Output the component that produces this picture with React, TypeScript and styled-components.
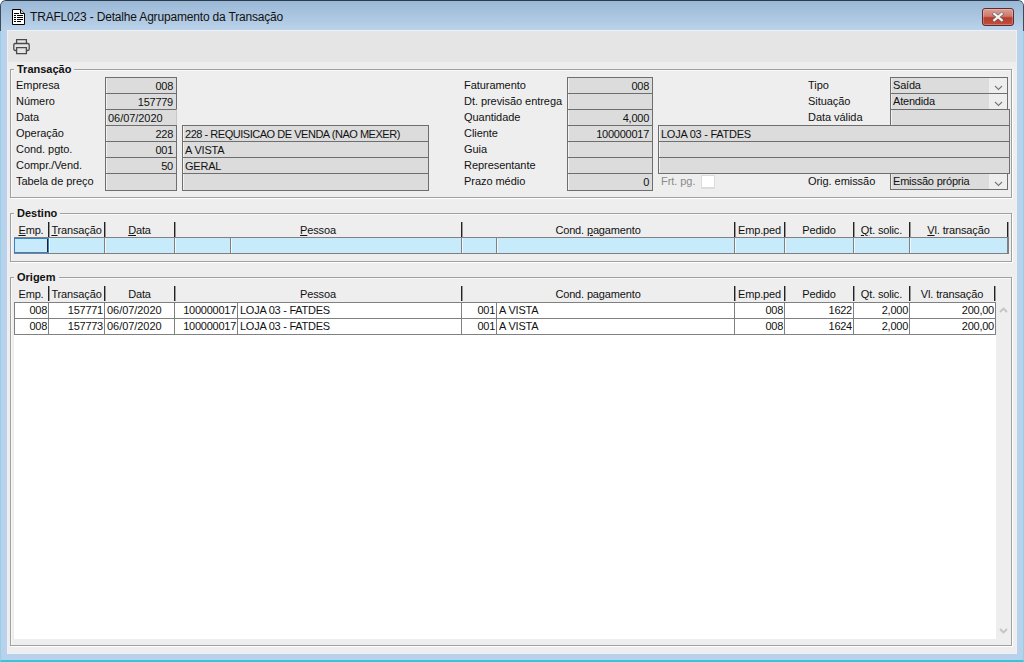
import React from 'react';
import styled, { createGlobalStyle } from 'styled-components';

const FONT = '"Liberation Sans", Arial, sans-serif';

const Global = createGlobalStyle`
  html, body { margin: 0; padding: 0; background: #fff; }
  * { box-sizing: border-box; }
  body { font: 11px/16px ${FONT}; color: #111; }
`;

const Frame = styled.div`
  width: 1024px; height: 662px; display: flex; flex-direction: column;
  padding: 0 7px 7px;
  background: #b9d1ea;
  border: 1px solid #8fd3e6; border-top-color: #2b3a48; border-bottom: 2px solid #35c6dc;
  border-radius: 6px 6px 0 0;
`;
const TitleBar = styled.header`
  height: 30px; flex: none; margin: 0 -7px; padding: 2px 9px 0 11px;
  display: flex; align-items: center; gap: 5px;
  background: linear-gradient(#9ab8d6, #bcd3ea);
  border-radius: 5px 5px 0 0;
  box-shadow: -1px 0 0 #3d4c5c, 1px 0 0 #3d4c5c;
`;
const TitleText = styled.h1`
  flex: 1; margin: 0; font: 400 12px/16px ${FONT}; letter-spacing: -0.18px; color: #111;
`;
const CloseButton = styled.button`
  width: 32px; height: 18px; padding: 0; display: flex; align-items: center; justify-content: center;
  border: 1px solid #5c2a32; border-radius: 3px;
  background: linear-gradient(#dc9e94 0, #cf7a6c 45%, #b83c2c 55%, #c0503e 100%);
  box-shadow: inset 0 0 0 1px rgba(255,255,255,.25);
`;
const Content = styled.main`
  flex: 1; min-height: 0; display: flex; flex-direction: column;
  background: #eeeeee; box-shadow: 0 0 0 1px #eaf2fa;
`;
const Toolbar = styled.div`
  height: 31px; flex: none; padding: 7px 0 0 5px; background: #e5e5e5;
`;
const Body = styled.div`
  flex: 1; min-height: 0; display: flex; flex-direction: column; gap: 15px;
  padding: 7px 4px 7px 2px;
`;
const Panel = styled.section<{ $height?: number; $grow?: boolean }>`
  position: relative; flex: ${p => (p.$grow ? '1' : 'none')}; min-height: 0;
  ${p => (p.$height ? `height: ${p.$height}px;` : '')}
  display: flex; flex-direction: column;
  border: 1px solid #a0a0a0;
  box-shadow: 1px 1px 0 #fff, inset 1px 1px 0 #f8f8f8;
  padding: 8px 2px 6px 3px;
`;
const Legend = styled.h2`
  position: absolute; left: 3px; top: -7px; margin: 0; padding: 0 3px;
  background: #eeeeee; font: 700 11px/13px ${FONT}; letter-spacing: 0; color: #111;
`;
const FormGrid = styled.div`
  display: grid; margin: -1px -2px 0 -3px;
  grid-template-columns: 94px 72px 5px 247px 35px 103px 86px 5px 150px 82px 120px;
  grid-auto-rows: 16px;
`;
const Label = styled.span<{ $col: number; $row: number; $muted?: boolean }>`
  grid-column: ${p => p.$col}; grid-row: ${p => p.$row};
  padding-left: ${p => (p.$col === 1 ? 5 : 0)}px;
  letter-spacing: -0.05px; line-height: 16px; white-space: nowrap;
  color: ${p => (p.$muted ? '#8a8a8a' : '#111')};
`;
const Field = styled.div<{ $col: string; $row: number; $right?: boolean; $tall?: boolean; $soft?: boolean; $track?: number }>`
  grid-column: ${p => p.$col}; grid-row: ${p => p.$row}; align-self: start;
  height: ${p => (p.$tall ? 18 : 17)}px; padding: 1px 2px 0 2px; position: relative;
  ${p => (p.$right ? 'padding-right: 3px;' : '')}
  background: #dcdcdc; border: 1px solid #6e6e6e;
  ${p => (p.$soft ? 'border-right-color: #c8c8c8; border-bottom-color:#8a8a8a;' : '')}
  box-shadow: inset 1px 0 0 #f2f2f2;
  text-align: ${p => (p.$right ? 'right' : 'left')};
  letter-spacing: ${p => p.$track ?? (p.$right ? -0.25 : -0.05)}px;
  line-height: 14px; white-space: nowrap; overflow: hidden;
`;
const Select = styled.div<{ $row: number }>`
  grid-column: 11; grid-row: ${p => p.$row}; align-self: start;
  height: 17px; margin: 0 2px 0 0; display: flex;
  background: #eeeeee; border: 1px solid #6e6e6e;
`;
const SelectValue = styled.span`
  flex: 1; background: #dcdcdc; padding-left: 1px; margin-left: 1px;
  letter-spacing: -0.2px; line-height: 14px;
`;
const SelectArrow = styled.span`
  width: 18px; flex: none; display: flex; align-items: flex-end; justify-content: center; padding-bottom: 2px;
`;
const CheckBox = styled.span`
  grid-column: 9; grid-row: 7; display: block; width: 14px; height: 14px; margin: 2px 0 0 43px;
  background: #fff; border: 1px solid #dcdcdc; border-width: 1px 1px 2px 1px;
`;

const HeadRow = styled.div<{ $cols: string }>`
  display: grid; grid-template-columns: ${p => p.$cols}; height: 16px; flex: none;
`;
const HeadCell = styled.div`
  text-align: center; line-height: 16px; letter-spacing: -0.15px; white-space: nowrap;
  border-right: 1px solid #222; overflow: hidden; height: 15px;
  box-shadow: 1px 0 0 #999;
  u { text-decoration: underline; }
`;
const FilterRow = styled.div<{ $cols: string }>`
  display: grid; grid-template-columns: ${p => p.$cols}; height: 17px; flex: none;
  margin-top: -1px; background: #c8ebfb;
  border-top: 1px solid #808080; border-bottom: 1px solid #808080; border-right: 1px solid #808080;
`;
const FilterCell = styled.div<{ $active?: boolean }>`
  border-right: 1px solid ${p => (p.$active ? '#222' : '#808080')};
  box-shadow: inset 1px 0 0 #eef9ff;
  ${p => (p.$active ? 'outline: 1px solid #3a80c8; outline-offset: -1px; border-right-width: 2px;' : '')}
`;
const ScrollArea = styled.div`
  flex: 1; min-height: 0; display: flex; gap: 1px; margin-top: 0;
`;
const TableBody = styled.div`
  width: 982px; flex: none; background: #fff; border-top: 1px solid #808080;
`;
const DataRow = styled.div<{ $cols: string }>`
  display: grid; grid-template-columns: ${p => p.$cols}; height: 16px;
  border-bottom: 1px solid #808080; border-left: 1px solid #808080;
`;
const DataCell = styled.div<{ $right?: boolean; $track?: number }>`
  border-right: 1px solid #808080; padding: 0 ${p => (p.$right ? 1 : 2)}px 0 2px;
  text-align: ${p => (p.$right ? 'right' : 'left')};
  line-height: 15px; letter-spacing: ${p => p.$track ?? (p.$right ? -0.25 : -0.05)}px;
  white-space: nowrap; overflow: hidden;
`;
const ScrollBar = styled.aside`
  width: 13px; flex: none; display: flex; flex-direction: column; justify-content: space-between;
  align-items: center; padding: 5px 0 5px;
`;

const Chevron = ({ color = '#777', up = false, w = 1.1 }: { color?: string; up?: boolean; w?: number }) => (
  <svg width="9" height="6" viewBox="0 0 9 6">
    <path d={up ? 'M1 5 L4.5 1.5 L8 5' : 'M1 1 L4.5 4.5 L8 1'} fill="none" stroke={color} strokeWidth={w} />
  </svg>
);

const DocIcon = () => (
  <svg width="13" height="16" viewBox="0 0 13 16">
    <path d="M.5.5H8.5L12.5 4.5V15.5H.5Z" fill="#fff" stroke="#000" />
    <path d="M8.5.5V4.5H12.5" fill="#ccc" stroke="#000" />
    <path d="M2 4.5h5M2 6.5h2M5 6.5h6M2 8.5h2M5 8.5h6M2 10.5h2M5 10.5h6M2 12.5h2M5 12.5h4" stroke="#000" strokeWidth="1" />
  </svg>
);

const PrinterIcon = () => (
  <svg width="17" height="17" viewBox="0 0 17 17" style={{ display: 'block' }}>
    <g fill="none" stroke="#4a4a4a" strokeWidth="1.3">
      <path d="M3.6 5.5V1.6h9.8v3.9" />
      <path d="M3.4 12.5H2.2a1.4 1.4 0 0 1-1.4-1.4V6.9a1.4 1.4 0 0 1 1.4-1.4h12.6a1.4 1.4 0 0 1 1.4 1.4v4.2a1.4 1.4 0 0 1-1.4 1.4h-1.2" />
      <path d="M3.6 9.6h9.8v6H3.6z" />
    </g>
  </svg>
);

const CloseGlyph = () => (
  <svg width="14" height="10" viewBox="0 0 14 10">
    <path d="M2 1 L12 9 M12 1 L2 9" stroke="#5a5a5a" strokeWidth="3.4" />
    <path d="M2.4 1.2 L11.6 8.8 M11.6 1.2 L2.4 8.8" stroke="#f4f4f4" strokeWidth="2.2" />
  </svg>
);

const headCols = '35px 56px 70px 287px 273px 50px 69px 56px 98px';
const destCols = '35px 56px 70px 56px 231px 35px 238px 50px 69px 56px 1fr';
const origHeadCols = '35px 56px 70px 287px 273px 50px 69px 56px 85px';
const origCols = '34px 56px 70px 63px 224px 35px 238px 50px 69px 56px 1fr';

const heads: [string, string][] = [
  ['E', 'mp.'], ['T', 'ransação'], ['D', 'ata'], ['P', 'essoa'], ['', 'Cond. |p|agamento'],
  ['', 'Emp.ped'], ['', 'Pedido'], ['Q', 't. solic.'], ['V', 'l. transação'],
];

const rows = [
  ['157771', '1622'],
  ['157773', '1624'],
];

export default function App() {
  return (
    <Frame>
      <Global />
      <TitleBar>
        <DocIcon />
        <TitleText>TRAFL023 - Detalhe Agrupamento da Transação</TitleText>
        <CloseButton aria-label="Fechar"><CloseGlyph /></CloseButton>
      </TitleBar>
      <Content>
        <Toolbar><PrinterIcon /></Toolbar>
        <Body>
          <Panel $height={129}>
            <Legend>Transação</Legend>
            <FormGrid>
              <Label $col={1} $row={1}>Empresa</Label>
              <Field $col="2" $row={1} $right>008</Field>
              <Label $col={1} $row={2}>Número</Label>
              <Field $col="2" $row={2} $right>157779</Field>
              <Label $col={1} $row={3}>Data</Label>
              <Field $col="2" $row={3} $soft>06/07/2020</Field>
              <Label $col={1} $row={4}>Operação</Label>
              <Field $col="2" $row={4} $right>228</Field>
              <Field $col="4" $row={4} $track={-0.47}>228 - REQUISICAO DE VENDA (NAO MEXER)</Field>
              <Label $col={1} $row={5}>Cond. pgto.</Label>
              <Field $col="2" $row={5} $right>001</Field>
              <Field $col="4" $row={5} $track={-0.2}>A VISTA</Field>
              <Label $col={1} $row={6}>Compr./Vend.</Label>
              <Field $col="2" $row={6} $right>50</Field>
              <Field $col="4" $row={6} $track={-0.2}>GERAL</Field>
              <Label $col={1} $row={7}>Tabela de preço</Label>
              <Field $col="2" $row={7} $tall />
              <Field $col="4" $row={7} $tall />

              <Label $col={6} $row={1}>Faturamento</Label>
              <Field $col="7" $row={1} $right>008</Field>
              <Label $col={6} $row={2}>Dt. previsão entrega</Label>
              <Field $col="7" $row={2} />
              <Label $col={6} $row={3}>Quantidade</Label>
              <Field $col="7" $row={3} $right>4,000</Field>
              <Label $col={6} $row={4}>Cliente</Label>
              <Field $col="7" $row={4} $right>100000017</Field>
              <Field $col="9 / 12" $row={4} $track={-0.25}>LOJA 03 - FATDES</Field>
              <Label $col={6} $row={5}>Guia</Label>
              <Field $col="7" $row={5} />
              <Field $col="9 / 12" $row={5} />
              <Label $col={6} $row={6}>Representante</Label>
              <Field $col="7" $row={6} />
              <Field $col="9 / 12" $row={6} />
              <Label $col={6} $row={7}>Prazo médio</Label>
              <Field $col="7" $row={7} $right $tall>0</Field>

              <Label $col={9} $row={7} $muted>&nbsp;Frt. pg.</Label>
              <CheckBox />

              <Label $col={10} $row={1}>Tipo</Label>
              <Select $row={1}><SelectValue>Saída</SelectValue><SelectArrow><Chevron /></SelectArrow></Select>
              <Label $col={10} $row={2}>Situação</Label>
              <Select $row={2}><SelectValue>Atendida</SelectValue><SelectArrow><Chevron /></SelectArrow></Select>
              <Label $col={10} $row={3}>Data válida</Label>
              <Field $col="11" $row={3} />
              <Label $col={10} $row={7}>Orig. emissão</Label>
              <Select $row={7}><SelectValue>Emissão própria</SelectValue><SelectArrow><Chevron /></SelectArrow></Select>
            </FormGrid>
          </Panel>

          <Panel $height={49}>
            <Legend>Destino</Legend>
            <HeadRow $cols={headCols}>
              {heads.map(([k, r], i) => {
                const parts = r.split('|');
                return (
                  <HeadCell key={i}>
                    {k && <u>{k}</u>}
                    {parts.length === 3 ? <>{parts[0]}<u>{parts[1]}</u>{parts[2]}</> : r}
                  </HeadCell>
                );
              })}
            </HeadRow>
            <FilterRow $cols={destCols}>
              {Array.from({ length: 11 }).map((_, i) => (
                <FilterCell key={i} $active={i === 0} />
              ))}
            </FilterRow>
          </Panel>

          <Panel $grow>
            <Legend>Origem</Legend>
            <HeadRow $cols={origHeadCols}>
              {['Emp.', 'Transação', 'Data', 'Pessoa', 'Cond. pagamento', 'Emp.ped', 'Pedido', 'Qt. solic.', 'Vl. transação'].map(h => (
                <HeadCell key={h}>{h}</HeadCell>
              ))}
            </HeadRow>
            <ScrollArea>
              <TableBody>
                {rows.map(([tx, pedido]) => (
                  <DataRow key={tx} $cols={origCols}>
                    <DataCell $right>008</DataCell>
                    <DataCell $right>{tx}</DataCell>
                    <DataCell>06/07/2020</DataCell>
                    <DataCell $right>100000017</DataCell>
                    <DataCell $track={-0.25}>LOJA 03 - FATDES</DataCell>
                    <DataCell $right>001</DataCell>
                    <DataCell $track={-0.2}>A VISTA</DataCell>
                    <DataCell $right>008</DataCell>
                    <DataCell $right>{pedido}</DataCell>
                    <DataCell $right>2,000</DataCell>
                    <DataCell $right>200,00</DataCell>
                  </DataRow>
                ))}
              </TableBody>
              <ScrollBar>
                <Chevron color="#c4c4c4" up w={1.8} />
                <Chevron color="#c4c4c4" w={1.8} />
              </ScrollBar>
            </ScrollArea>
          </Panel>
        </Body>
      </Content>
    </Frame>
  );
}
